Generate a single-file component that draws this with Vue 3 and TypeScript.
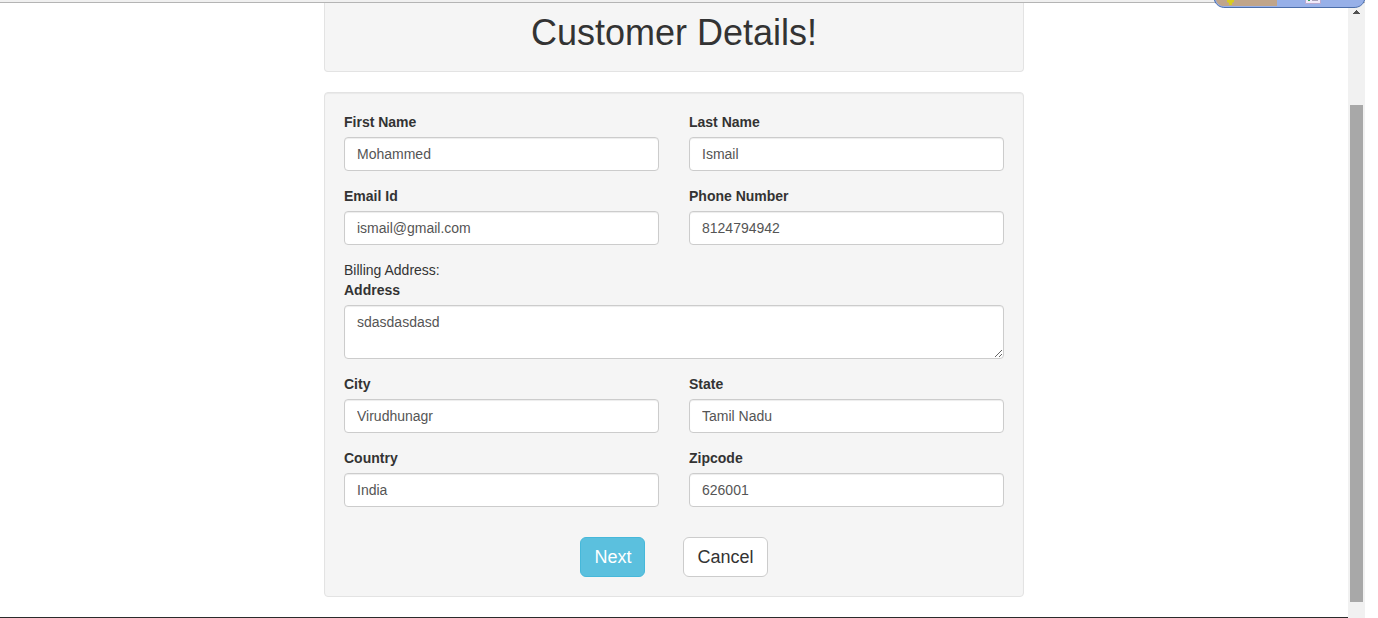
<script setup lang="ts">
import { reactive } from 'vue'

interface Field {
  id: string
  label: string
  type: string
}

const details = reactive<Record<string, string>>({
  firstName: 'Mohammed',
  lastName: 'Ismail',
  email: 'ismail@gmail.com',
  phone: '8124794942',
  address: 'sdasdasdasd',
  city: 'Virudhunagr',
  state: 'Tamil Nadu',
  country: 'India',
  zipcode: '626001',
})

const contactFields: Field[] = [
  { id: 'firstName', label: 'First Name', type: 'text' },
  { id: 'lastName', label: 'Last Name', type: 'text' },
  { id: 'email', label: 'Email Id', type: 'email' },
  { id: 'phone', label: 'Phone Number', type: 'tel' },
]

const placeFields: Field[] = [
  { id: 'city', label: 'City', type: 'text' },
  { id: 'state', label: 'State', type: 'text' },
  { id: 'country', label: 'Country', type: 'text' },
  { id: 'zipcode', label: 'Zipcode', type: 'text' },
]
</script>

<template>
  <div class="window">
    <div class="view">
      <div class="strip"></div>
      <div class="body">
        <main class="page">
          <div class="container">
            <header class="well title-well">
              <h1>Customer Details!</h1>
            </header>
            <form class="well" @submit.prevent>
              <div class="grid">
                <div v-for="field in contactFields" :key="field.id" class="group">
                  <label :for="field.id">{{ field.label }}</label>
                  <input :id="field.id" v-model="details[field.id]" class="control" :type="field.type" />
                </div>
              </div>
              <div class="caption">Billing Address:</div>
              <div class="group">
                <label for="address">Address</label>
                <textarea id="address" v-model="details.address" class="control area" rows="2"></textarea>
              </div>
              <div class="grid">
                <div v-for="field in placeFields" :key="field.id" class="group">
                  <label :for="field.id">{{ field.label }}</label>
                  <input :id="field.id" v-model="details[field.id]" class="control" :type="field.type" />
                </div>
              </div>
              <div class="actions">
                <button class="btn primary" type="submit">Next</button>
                <button class="btn" type="button">Cancel</button>
              </div>
            </form>
          </div>
        </main>
        <div class="scrollbar" aria-hidden="true">
          <svg class="arrow" width="7" height="4" viewBox="0 0 7 4" shape-rendering="crispEdges">
            <path d="M3 0h1v1h1v1h1v1h1v1H0V3h1V2h1V1h1z" fill="#505050" />
          </svg>
          <div class="thumb"></div>
        </div>
      </div>
      <svg class="badge" width="151" height="8" viewBox="0 0 151 8" aria-hidden="true">
        <path d="M0 0C2 5 6 7.5 11 7.5H140C145 7.5 149 5 151 0Z" fill="#97b0e8" />
        <path d="M2 0H63V6H10C6 6 3 4 2 0Z" fill="#c0a58a" />
        <path d="M13 0H20V2L18 3V5H15V3L13 2Z" fill="#d8cc20" />
        <path d="M91.5 0V3.5H106.5V0Z" fill="#f1eafa" />
        <path d="M91.5 0V3.5H106.5V0" fill="none" stroke="#b9a9cf" />
        <path d="M94 0H96V1H94Z" fill="#35a853" />
        <path d="M98 0.5H104" stroke="#aaa3b8" />
        <path d="M0.5 0C2 5 6 7.5 11 7.5H140C145 7.5 149 5 150.5 0" fill="none" stroke="#4c6eaa" />
      </svg>
    </div>
  </div>
</template>

<style>
body {
  margin: 0;
  background: #fff;
}
</style>

<style scoped>
* {
  box-sizing: border-box;
}

.window {
  padding-right: 13px;
  color: #333;
  font-family: "Liberation Sans", Arial, sans-serif;
  font-size: 14px;
  line-height: 20px;
}

.view {
  position: relative;
  display: flex;
  flex-direction: column;
  min-height: 100vh;
}

.strip {
  height: 3px;
  background: #f0f0f0;
  border-bottom: 1px solid #b4b4b4;
}

.body {
  display: flex;
  flex: 1;
}

.page {
  flex: 1;
  padding: 0 20px 20px;
  border-bottom: 1px solid #2b2b2b;
}

.container {
  max-width: 700px;
  margin: 0 auto;
}

.well {
  padding: 19px;
  background: #f5f5f5;
  border: 1px solid #e3e3e3;
  border-radius: 4px;
  box-shadow: inset 0 1px 1px rgba(0, 0, 0, 0.05);
}

.title-well {
  margin-bottom: 20px;
  padding-top: 10px;
  padding-bottom: 18px;
  border-top: 0;
  border-radius: 0 0 4px 4px;
  box-shadow: none;
}

h1 {
  margin: 0;
  font-size: 36px;
  font-weight: 400;
  line-height: 40px;
  text-align: center;
}

.grid {
  display: grid;
  grid-template-columns: 1fr 1fr;
  column-gap: 30px;
}

.group {
  margin-bottom: 15px;
}

label {
  display: block;
  margin-bottom: 5px;
  font-weight: 700;
}

.control {
  display: block;
  width: 100%;
  height: 34px;
  margin: 0;
  padding: 6px 12px;
  color: #555;
  font: inherit;
  background: #fff;
  border: 1px solid #ccc;
  border-radius: 4px;
  box-shadow: inset 0 1px 1px rgba(0, 0, 0, 0.075);
}

.area {
  height: 54px;
  resize: vertical;
}

.actions {
  display: flex;
  justify-content: center;
  gap: 38px;
  padding-top: 15px;
}

.btn {
  padding: 7px 13px;
  color: #333;
  font-family: inherit;
  font-size: 18px;
  line-height: 24px;
  background: #fff;
  border: 1px solid #ccc;
  border-radius: 6px;
  cursor: pointer;
}

.primary {
  color: #fff;
  background: #5bc0de;
  border-color: #46b8da;
}

.scrollbar {
  display: flex;
  flex-direction: column;
  width: 17px;
  padding: 7px 2px 16px;
  background: #f1f1f1;
}

.arrow {
  align-self: center;
  margin-bottom: 91px;
}

.thumb {
  flex: 1;
  background: #a8a8a8;
}

.badge {
  position: absolute;
  top: 0;
  right: 0;
}
</style>
